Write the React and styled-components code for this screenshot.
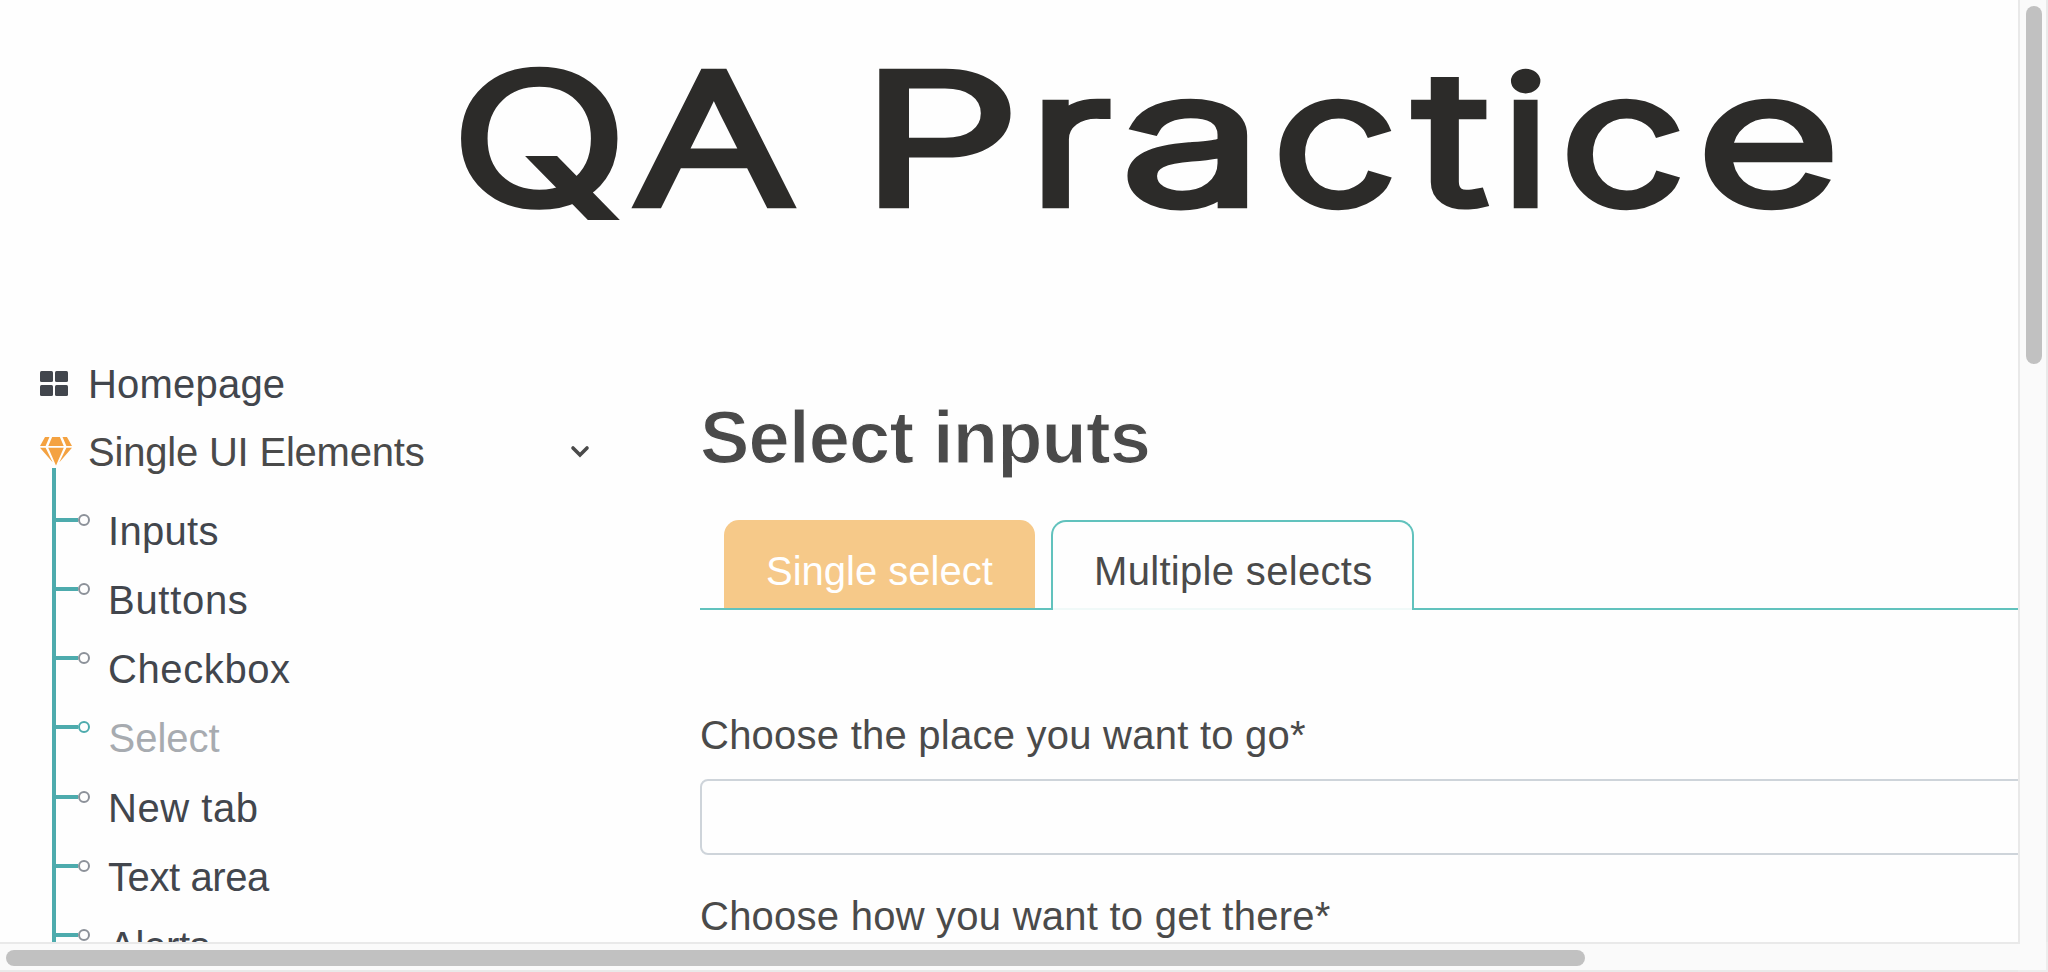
import React from "react";
import styled, { createGlobalStyle, css } from "styled-components";

const colors = {
  ink: "#2c2b29",
  nav: "#42464d",
  text: "#4a4a4a",
  muted: "#a7abb0",
  branch: "#4dabad",
  teal: "#61c2bd",
  orange: "#f6c989",
};

const GlobalStyle = createGlobalStyle`
  *, *::before, *::after { box-sizing: border-box; }
  body {
    margin: 0;
    overflow: hidden;
    background: #fefefe;
    color: ${colors.text};
    font: 40px/46px "Liberation Sans", Arial, sans-serif;
  }
`;

const Window = styled.div`
  display: grid;
  grid-template-columns: 2018px 30px;
  grid-template-rows: 942px 30px;
  width: 2048px;
  height: 972px;
  overflow: hidden;
`;

const Page = styled.div`
  display: flex;
  flex-direction: column;
  min-width: 0;
  min-height: 0;
  overflow: hidden;
`;

const Header = styled.header`
  flex: none;
  height: 361px;
`;

const Wordmark = styled.svg`
  display: block;
  width: 2018px;
  height: 361px;
  fill: ${colors.ink};
  stroke: ${colors.ink};
  stroke-width: 12.5px;
  stroke-linejoin: miter;
  stroke-miterlimit: 2.5;
  font-family: Inter, sans-serif;
  font-size: 175px;
  font-weight: 200;
`;

const Columns = styled.div`
  flex: 1;
  display: flex;
  min-height: 0;
`;

const Sidebar = styled.nav`
  flex: none;
  width: 700px;
  color: ${colors.nav};
`;

const NavRow = styled.div`
  display: flex;
  align-items: flex-start;
  height: ${(p) => p.$height}px;
  padding-left: 39.7px;
  color: ${(p) => p.$color};
`;

const IconSlot = styled.span`
  display: flex;
  flex: none;
  width: 48.3px;
  padding-top: ${(p) => p.$top}px;
`;

const NavText = styled.span`
  flex: none;
  white-space: nowrap;
  letter-spacing: ${(p) => p.$track}px;
`;

const GridIcon = styled.span`
  display: grid;
  grid-template-columns: 13px 13px;
  grid-template-rows: 11px 11px;
  gap: 2.5px 2px;
  margin-left: 0.3px;
`;

const GridCell = styled.i`
  border-radius: 1.5px;
  background: ${colors.nav};
`;

const Gem = styled.svg`
  display: block;
  width: 32px;
  height: 28.5px;
  fill: #f4a241;
`;

const Chevron = styled.svg`
  display: block;
  width: 20px;
  height: 14px;
  margin: 15px 0 0 145px;
  fill: none;
  stroke: ${colors.text};
  stroke-width: 3.6;
  stroke-linecap: round;
`;

const Tree = styled.ul`
  margin: 0 0 0 52px;
  padding: 32px 0 0;
  border-left: 4px solid ${colors.branch};
  list-style: none;
`;

const TreeItem = styled.li`
  display: flex;
  align-items: flex-start;
  height: 69.17px;
`;

const Twig = styled.span`
  width: 22px;
  height: 4px;
  margin-top: 18px;
  background: ${colors.branch};
`;

const Knot = styled.span`
  width: 12px;
  height: 12px;
  margin-top: 14px;
  border: 2px solid ${(p) => (p.$active ? colors.branch : "#8c9199")};
  border-radius: 50%;
`;

const TreeText = styled.span`
  margin: 8px 0 0 ${(p) => p.$indent}px;
  white-space: nowrap;
  letter-spacing: ${(p) => p.$track}px;
  color: ${(p) => (p.$active ? colors.muted : colors.nav)};
`;

const Main = styled.main`
  flex: none;
  width: 1860px;
  padding-top: 35px;
`;

const Heading = styled.h1`
  margin: 0;
  color: ${colors.text};
  font-size: 74px;
  font-weight: 700;
  line-height: 84px;
  letter-spacing: -0.8px;
  -webkit-text-stroke: 1.2px #fefefe;
`;

const Tabs = styled.div`
  display: flex;
  gap: 16px;
  height: 90px;
  margin-top: 40px;
  padding-left: 24px;
  border-bottom: 2px solid ${colors.teal};
`;

const Tab = styled.div`
  flex: none;
  width: ${(p) => p.$width}px;
  padding: 28px 0 0 42px;
  border-radius: 15px 15px 0 0;
  white-space: nowrap;
  letter-spacing: ${(p) => p.$track}px;
  ${(p) =>
    p.$filled
      ? css`
          background: ${colors.orange};
          color: #fff;
        `
      : css`
          height: 90px;
          padding: 26px 0 0 41px;
          border: 2px solid ${colors.teal};
          border-bottom: 0;
          background: linear-gradient(#fefefe 86px, #f0f9f8 86px);
        `}
`;

const Form = styled.form`
  padding-top: 102px;
`;

const Label = styled.label`
  display: block;
  white-space: nowrap;
  letter-spacing: 0.24px;
`;

const SelectBox = styled.div`
  height: 76px;
  margin: 21px 0 38px;
  border: 2px solid #ced4da;
  border-radius: 8px;
`;

const VerticalTrack = styled.div`
  padding: 6px 4px 0 6px;
  border: solid #e9e9e9;
  border-width: 0 2px;
  background: #fafafa;
`;

const HorizontalTrack = styled.div`
  padding: 6px 0 4px 6px;
  border: solid #e9e9e9;
  border-width: 2px 0;
  background: #fafafa;
`;

const Thumb = styled.div`
  width: ${(p) => p.$width}px;
  height: ${(p) => p.$height}px;
  border-radius: 8px;
  background: #c1c1c1;
`;

const Corner = styled.div`
  border: solid #ededed;
  border-width: 0 2px 2px 0;
  background:
    linear-gradient(#e9e9e9, #e9e9e9) 0 0 / 2px 2px no-repeat,
    #fafafa;
`;

// Each letter's drawn left and right edges, then its font ink edges and advance per 200px.
const letters = [
  ["Q", 460.5, 620.5, 13, 140, 151],
  ["A", 632.9, 795.4, 4, 127.5, 131.5],
  [" ", 820, 860, 0, 40, 40],
  ["P", 878, 1014.5, 20, 114, 124],
  ["r", 1041.3, 1113.2, 17, 66, 69],
  ["a", 1128, 1249.8, 10.5, 92, 108],
  ["c", 1278.6, 1391.8, 11, 101, 110],
  ["t", 1411.2, 1488.6, 1, 53, 56],
  ["i", 1508.4, 1542.8, 13, 32.5, 45.5],
  ["c", 1566.4, 1680.2, 11, 101, 110],
  ["e", 1703.8, 1833, 11, 104.5, 115],
];

const UNIT = 175 / 200;
const OUTLINE = 6.25;

function Logo() {
  return (
    <Wordmark viewBox="0 0 2018 361">
      <text y="201.75" xmlSpace="preserve">
        {letters.map(([char, left, right, inkLeft, inkRight, advance], i) => {
          const scale = (right - left) / ((inkRight - inkLeft) * UNIT + 2 * OUTLINE);
          return (
            <tspan
              key={i}
              x={left + (OUTLINE - inkLeft * UNIT) * scale}
              textLength={advance * UNIT * scale}
              lengthAdjust="spacingAndGlyphs"
            >
              {char}
            </tspan>
          );
        })}
      </text>
    </Wordmark>
  );
}

const elements = [
  { name: "Inputs", track: 0.3, indent: 18 },
  { name: "Buttons", track: 0.7, indent: 18 },
  { name: "Checkbox", track: 0.6, indent: 18 },
  { name: "Select", track: 0, indent: 18.5, active: true },
  { name: "New tab", track: 0.55, indent: 18 },
  { name: "Text area", track: -0.4, indent: 18 },
  { name: "Alerts", track: -0.3, indent: 19 },
];

export default function App() {
  return (
    <Window>
      <GlobalStyle />
      <Page>
        <Header>
          <Logo />
        </Header>
        <Columns>
          <Sidebar>
            <NavRow $height={68} $color={colors.nav}>
              <IconSlot $top={10}>
                <GridIcon>
                  <GridCell />
                  <GridCell />
                  <GridCell />
                  <GridCell />
                </GridIcon>
              </IconSlot>
              <NavText $track={0.2}>Homepage</NavText>
            </NavRow>
            <NavRow $height={39} $color={colors.text}>
              <IconSlot $top={8}>
                <Gem viewBox="0 0 576 512">
                  <path d="M485.5 0L576 160H474.9L405.7 0h79.8zm-128 0l69.2 160H149.3L218.5 0h139zm-267 0h79.8l-69.2 160H0L90.5 0zM0 192h100.7l123 251.7c1.5 3.1-2.7 5.9-5 3.3L0 192zm148.2 0h279.6l-137 318.2c-1 2.4-4.5 2.4-5.5 0L148.2 192zm204.1 251.7l123-251.7H576L357.3 446.9c-2.3 2.7-6.5-.1-5-3.2z" />
                </Gem>
              </IconSlot>
              <NavText $track={-0.2}>Single UI Elements</NavText>
              <Chevron viewBox="0 0 20 14">
                <path d="M3 4l7 7 7-7" />
              </Chevron>
            </NavRow>
            <Tree>
              {elements.map((item) => (
                <TreeItem key={item.name}>
                  <Twig />
                  <Knot $active={item.active} />
                  <TreeText $active={item.active} $track={item.track} $indent={item.indent}>
                    {item.name}
                  </TreeText>
                </TreeItem>
              ))}
            </Tree>
          </Sidebar>
          <Main>
            <Heading>Select inputs</Heading>
            <Tabs>
              <Tab $filled $width={311} $track={0}>
                Single select
              </Tab>
              <Tab $width={363} $track={0.32}>
                Multiple selects
              </Tab>
            </Tabs>
            <Form>
              <Label>Choose the place you want to go*</Label>
              <SelectBox />
              <Label>Choose how you want to get there*</Label>
            </Form>
          </Main>
        </Columns>
      </Page>
      <VerticalTrack>
        <Thumb $width={16} $height={358} />
      </VerticalTrack>
      <HorizontalTrack>
        <Thumb $width={1579} $height={16} />
      </HorizontalTrack>
      <Corner />
    </Window>
  );
}
